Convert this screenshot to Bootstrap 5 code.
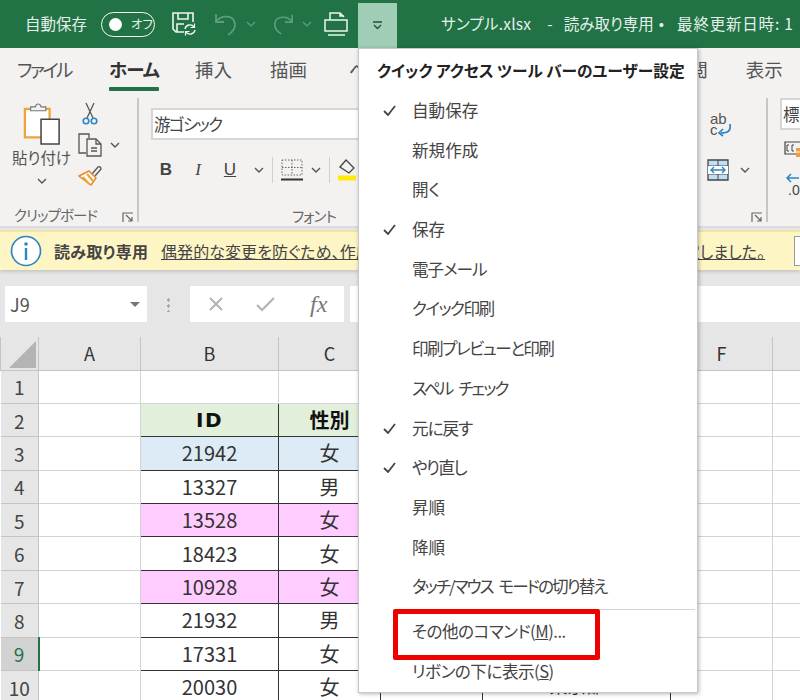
<!DOCTYPE html>
<html lang="ja">
<head>
    <meta charset="UTF-8">
    <meta name="viewport" content="width=device-width, initial-scale=1.0">
    <title>サンプル.xlsx - 読み取り専用</title>
    <link href="https://cdn.jsdelivr.net/npm/bootstrap@5.3.0/dist/css/bootstrap.min.css" rel="stylesheet">
    <style>
        html, body { height: 700px; overflow: hidden; }
        body {
            position: relative;
            width: 800px;
            font-family: "Noto Sans CJK JP", "Noto Sans", sans-serif;
            font-feature-settings: "palt";
            color: #444;
            background: #e6e6e6;
        }
        .titlebar { height: 48px; background: #217346; color: #e6f0ea; font-size: 15.5px; white-space: nowrap; overflow: hidden; }
        .title-h { height: 48px; }
        .autosave { margin-left: 25px; width: 76px; font-size: 15.5px; }
        .toggle-pill { width: 54px; height: 25px; border: 1.5px solid #f2f7f4; border-radius: 13px; font-size: 12.5px; gap: 9px; padding-left: 7px; flex: none; }
        .toggle-dot { width: 13px; height: 13px; background: #fff; border-radius: 50%; }
        .print-ic { margin-left: 12px; }
        .qat-btn { width: 39px; height: 45px; margin-top: 3px; margin-left: 10px; background: #a0cdb5; }
        .title-file { margin-left: 44px; letter-spacing: .25px; }
        .title-dash { margin-left: 16px; }
        .title-ro { margin-left: 11px; }
        .title-dot { margin-left: 5px; }
        .title-time { margin-left: 13px; letter-spacing: .8px; }
        .tabrow { height: 44px; background: #f3f2f1; font-size: 18.5px; color: #555; overflow: hidden; }
        .tab-item { white-space: nowrap; }
        .tab-file { margin-left: 17px; letter-spacing: -2.5px; }
        .tab-on { margin-left: 38px; margin-top: 7px; color: #333; font-weight: 700; letter-spacing: -1px; }
        .tab-on::after { content: ""; display: block; height: 4px; background: #217346; border-radius: 1px; margin-top: 3px; }
        .tab-ins { margin-left: 36px; }
        .tab-draw { margin-left: 38px; }
        .tab-page { margin-left: 42px; }
        .tab-review { margin-left: 267px; }
        .tab-view { margin-left: 38px; }
        .ribbon { height: 136px; background: #f3f2f1; border-bottom: 2px solid #dcdbda; font-size: 15.5px; color: #555; overflow: hidden; }
        .rb-clip { width: 139px; border-right: 2px solid #c8c6c4; margin: 6px 0 4px; flex: none; }
        .rb-font { width: 330px; flex: none; }
        .rb-align { width: 299px; border-right: 2px solid #c8c6c4; margin: 6px 0 4px; flex: none; padding-left: 238px; }
        .rb-num { flex: 1 1 auto; overflow: hidden; padding-left: 12px; }
        .rb-label { font-size: 14.5px; color: #666; line-height: 20px; white-space: nowrap; letter-spacing: -.9px; }
        .paste-col { width: 78px; padding-left: 5px; padding-top: 5px; }
        .paste-label { font-size: 15.5px; line-height: 20px; margin-top: 2px; white-space: nowrap; }
        .paste-chev { margin-top: 11px; }
        .copy-chev { margin-left: 6px; }
        .clip-foot { padding-left: 14px; height: 14px; }
        .launcher { margin: 4px 0 0 25px; }
        .font-box { width: 260px; height: 32px; margin-left: 12px; margin-top: 16px; flex: none; background: #fff; border: 2px solid #d6d6d6; font-size: 16.5px; line-height: 28px; padding-left: 1px; color: #444; white-space: nowrap; letter-spacing: -1.5px; }
        .fmt-row { margin-top: 18px; padding-left: 19px; height: 24px; }
        .font-foot { margin-top: auto; padding-left: 153px; height: 20px; }
        .rb-sep { width: 1px; height: 26px; background: #d0d0d0; }
        .glyph-b, .glyph-i, .glyph-u { width: 16px; font-size: 17px; color: #444; text-align: center; font-family: "Liberation Sans", sans-serif; }
        .glyph-b { font-weight: 700; }
        .glyph-i { font-style: italic; font-family: "Liberation Serif", serif; margin-left: 16px; }
        .glyph-u { text-decoration: underline; margin-left: 16px; }
        .wrap-ic { margin: 15px 0 0 2px; font-family: "Liberation Sans", sans-serif; }
        .merge-row { margin-top: 22px; }
        .merge-chev { margin-left: 11px; }
        .align-foot { margin-top: auto; padding-left: 44px; height: 18px; }
        .style-box { width: 40px; height: 32px; margin-top: 6px; background: #fff; border: 2px solid #d6d6d6; font-size: 16.5px; line-height: 28px; padding-left: 1px; color: #444; white-space: nowrap; }
        .cond-ic { margin: 10px 0 0 4px; }
        .dec-stack { margin: 13px 0 0 5px; }
        .dec-text { font-size: 14px; line-height: 1; color: #444; font-family: "Liberation Sans", sans-serif; white-space: nowrap; margin-left: 3px; }
        .gap-strip { height: 2px; background: #e6e6e6; }
        .infobar { height: 40px; background: #fdf5c4; border-top: 2px solid #ece4a8; box-shadow: 0 2px 3px rgba(0,0,0,.14); font-size: 16px; white-space: nowrap; overflow: hidden; color: #444; position: relative; }
        .info-ic { margin-left: 10px; flex: none; }
        .info-title { margin-left: 12px; width: 107px; flex: none; letter-spacing: .35px; }
        .info-msg { text-decoration: underline; width: 633px; flex: none; letter-spacing: .08px; }
        .info-btn { width: 60px; height: 30px; background: #fff; border: 1px solid #999; flex: none; }
        .formula-row { height: 67px; padding: 16px 0 15px 5px; }
        .name-box { width: 142px; height: 36px; background: #fff; font-size: 18px; color: #555; padding: 0 7px 0 5px; flex: none; }
        .fx-box { width: 154px; height: 36px; background: #fff; color: #aaa; flex: none; padding-left: 18px; }
        .fx-input { height: 36px; background: #fff; margin-left: 6px; }
        .fx-glyph { font-family: "Liberation Serif", serif; font-style: italic; font-size: 24px; color: #777; margin-left: 35px; line-height: 1; }
        .v-dots { width: 3px; height: 15px; background-image: radial-gradient(circle, #aaa 1.5px, transparent 1.6px); background-size: 3px 6px; margin: 0 20px; flex: none; }
        .sheet { table-layout: fixed; border-collapse: collapse; width: 800px; background: #fff; color: #333; }
        .sheet th, .sheet td { border: 1px solid #d4d4d4; padding: 0; text-align: center; font-weight: 400; font-size: 20px; height: 33.4px; line-height: 1; overflow: hidden; white-space: nowrap; }
        .sheet thead th { height: 33px; background: #e6e6e6; font-size: 18px; border-color: #c4c4c4; border-top: 0; color: #333; }
        .sheet .rowhead { background: #e6e6e6; font-size: 19px; color: #444; border-color: #c4c4c4; border-left: 0; }
        .sheet .rowhead-on { background: #d2d2d2; color: #217346; border-right: 2px solid #217346; }
        .corner-tri { width: 0; height: 0; border-style: solid; border-width: 0 0 27px 27px; border-color: transparent transparent #b4b4b4 transparent; margin: 3px 0 0 8px; }
        .sheet .cell-box { border-color: #333; }
        .sheet .cell-head { background: #e2efda; font-weight: 700; color: #111; }
        .sheet .id-head { font-family: "DejaVu Sans", sans-serif; font-size: 20px; letter-spacing: 1.5px; }
        .sheet .cell-blue { background: #ddebf7; }
        .sheet .cell-pink { background: #ffccff; }
        .sheet .cell-addr { font-size: 18px; padding-bottom: 5px; }
        .qat-menu { position: absolute; left: 358px; top: 48px; width: 340px; height: 645px; margin: 0; padding: 0; display: block; border: 1px solid #c8c8c8; border-radius: 0; background: #fff; box-shadow: 1px 1px 4px rgba(0,0,0,.28); color: #444; }
        .qat-menu .dropdown-header { padding: 10px 0 0 18px; height: 42px; font-size: 15.7px; font-weight: 700; color: #222; white-space: nowrap; }
        .qat-menu .dropdown-item { position: relative; height: 39.7px; line-height: 39.7px; padding: 0 0 0 53px; color: #444; font-size: 16.6px; white-space: nowrap; }
        .qat-menu .dropdown-item.kana-s { letter-spacing: -.5px; }
        .qat-menu .dropdown-item.kana-m { letter-spacing: -1px; }
        .qat-menu .dropdown-item.kana-l { letter-spacing: -1.5px; }
        .qat-menu .dropdown-item.kana-gap { letter-spacing: -1.9px; word-spacing: 4px; }
        .qat-menu .dropdown-divider { margin: 2px 2px 2px 38px; border-color: #d4d4d4; opacity: 1; }
        .menu-check { position: absolute; left: 24px; top: 14px; }
        .red-box { position: absolute; left: 393px; top: 609px; width: 207px; height: 51px; border: 5px solid #ee0000; border-radius: 2px; z-index: 1001; }
    </style>
</head>
<body>
    <!-- タイトルバー -->
    <div class="titlebar d-flex align-items-start">
        <div class="title-h d-flex align-items-center">
            <span class="autosave">自動保存</span>
            <span class="toggle-pill d-flex align-items-center"><span class="toggle-dot"></span><span>オフ</span></span>
            <svg class="ms-3" width="27" height="26" viewBox="0 0 27 26" fill="none" stroke="#eef5f0" stroke-width="1.6"><path d="M13 21H5l-3-3V2h20v9"/><path d="M7 2v6h10V2M6 21v-8h7"/><path d="M14 18a5 5 0 0 1 9-2M24 19a5 5 0 0 1-9 2" stroke-width="1.4"/><path d="M23.500 12.500v4h-4M14.500 24.500v-4h4" stroke-width="1.2"/></svg>
            <svg class="ms-3" width="24" height="26" viewBox="0 0 24 26" fill="none" stroke="#5c9d7c" stroke-width="1.8"><path d="M2 3v8h8M2 11C6 4 20 3 21 13c.5 5-4 9-7 11"/></svg>
            <svg class="ms-2" width="10" height="6" viewBox="0 0 10 6" fill="none" stroke="#5c9d7c" stroke-width="1.4"><path d="M1 1l4 4 4-4"/></svg>
            <svg class="ms-3" width="22" height="26" viewBox="0 0 24 26" fill="none" stroke="#5c9d7c" stroke-width="1.8"><path d="M22 3v8h-8M22 11C18 4 4 3 3 13c-.5 5 4 9 7 11"/></svg>
            <svg class="ms-2" width="10" height="6" viewBox="0 0 10 6" fill="none" stroke="#5c9d7c" stroke-width="1.4"><path d="M1 1l4 4 4-4"/></svg>
            <svg class="print-ic" width="24" height="24" viewBox="0 0 24 24" fill="none" stroke="#eef5f0" stroke-width="1.5"><path d="M1 8h22v11H1zM4 23h17M6 8V1h10l4 4M16 1v3h4"/></svg>
        </div>
        <div class="qat-btn d-flex align-items-center justify-content-center flex-shrink-0">
            <svg width="11" height="9" viewBox="0 0 11 9" fill="none" stroke="#24513a" stroke-width="1.4"><path d="M1 1h9M2 4l3.500 3.500L9 4"/></svg>
        </div>
        <div class="title-h d-flex align-items-center">
            <span class="title-file">サンプル.xlsx</span><span class="title-dash">-</span><span class="title-ro">読み取り専用</span><span class="title-dot">•</span><span class="title-time">最終更新日時: 1</span>
        </div>
    </div>

    <!-- タブ -->
    <div class="tabrow d-flex align-items-center">
        <span class="tab-item tab-file">ファイル</span>
        <span class="tab-item tab-on">ホーム</span>
        <span class="tab-item tab-ins">挿入</span>
        <span class="tab-item tab-draw">描画</span>
        <span class="tab-item tab-page">ページ</span>
        <span class="tab-item tab-review">校閲</span>
        <span class="tab-item tab-view">表示</span>
    </div>

    <!-- リボン -->
    <div class="ribbon d-flex">
        <div class="rb-clip d-flex flex-column">
            <div class="d-flex flex-grow-1">
                <div class="paste-col d-flex flex-column align-items-center">
                    <svg width="38" height="42" viewBox="0 0 40 44" fill="none"><path d="M2 6h26v30H2z" fill="#fff" stroke="#f0a33e" stroke-width="2.400"/><path d="M8 7V4h5c1-4 5-4 6 0h5v4H8z" fill="#f3f2f1" stroke="#777" stroke-width="1.200"/><path d="M19 17h19v26H19z" fill="#fff" stroke="#444" stroke-width="1.600"/></svg>
                    <span class="paste-label">貼り付け</span>
                    <svg class="paste-chev" width="10" height="6" viewBox="0 0 10 6" fill="none" stroke="#555" stroke-width="1.400"><path d="M1 1l4 4 4-4"/></svg>
                </div>
                <div class="d-flex flex-column align-items-start pt-1">
                    <svg class="ms-1" width="16" height="23" viewBox="0 0 16 23" fill="none"><path d="M4 1l7 15M12 1L5 16" stroke="#555" stroke-width="1.300"/><circle cx="4" cy="19" r="2.800" stroke="#2b86c5" stroke-width="1.600"/><circle cx="12" cy="19" r="2.800" stroke="#2b86c5" stroke-width="1.600"/></svg>
                    <div class="d-flex align-items-center mt-2">
                        <svg width="26" height="24" viewBox="0 0 26 24" fill="none" stroke="#555" stroke-width="1.300"><path d="M8 20H1V1h10v4"/><path d="M9 6h9l5 5v12H9z" fill="#f3f2f1"/><path d="M18 6v5h5M13 15h6M13 18h6"/></svg>
                        <svg class="copy-chev" width="10" height="6" viewBox="0 0 10 6" fill="none" stroke="#555" stroke-width="1.400"><path d="M1 1l4 4 4-4"/></svg>
                    </div>
                    <svg class="mt-2" width="25" height="21" viewBox="0 0 25 21" fill="none"><path d="M14 9l6-7c1-1 3 0 3 2l-6 7" fill="#f3f2f1" stroke="#555" stroke-width="1.300"/><path d="M1 11l10-5 7 7-5 7z" fill="#fff" stroke="#e8892b" stroke-width="1.500"/><path d="M5 12l6 7M9 9l6 7" stroke="#f0a33e" stroke-width="2.200"/></svg>
                </div>
            </div>
            <div class="clip-foot d-flex align-items-center">
                <span class="rb-label">クリップボード</span>
                <svg class="launcher" width="12" height="11" viewBox="0 0 12 11" fill="none" stroke="#666" stroke-width="1.200"><path d="M1 10V1h10M4 3l6 6M10 5v4H6"/></svg>
            </div>
        </div>
        <div class="rb-font d-flex flex-column">
            <div class="font-box">游ゴシック</div>
            <div class="fmt-row d-flex align-items-center">
                <span class="glyph-b">B</span>
                <span class="glyph-i">I</span>
                <span class="glyph-u">U</span>
                <svg class="ms-3" width="10" height="6" viewBox="0 0 10 6" fill="none" stroke="#555" stroke-width="1.400"><path d="M1 1l4 4 4-4"/></svg>
                <span class="rb-sep ms-2"></span>
                <svg class="ms-2" width="22" height="22" viewBox="0 0 22 22" fill="none"><path d="M1 1h20v15H1zM11 1v15M1 8.500h20" stroke="#666" stroke-dasharray="1.500 1.500"/><path d="M0 20.500h22" stroke="#333" stroke-width="2"/></svg>
                <svg class="ms-2" width="10" height="6" viewBox="0 0 10 6" fill="none" stroke="#555" stroke-width="1.400"><path d="M1 1l4 4 4-4"/></svg>
                <span class="rb-sep ms-2"></span>
                <svg class="ms-2" width="18" height="24" viewBox="0 0 18 24" fill="none"><path d="M2 9l6-7 8 8-5 5z" stroke="#444" stroke-width="1.300"/><path d="M0 20h18" stroke="#ffec00" stroke-width="5"/></svg>
            </div>
            <div class="rb-label font-foot">フォント</div>
        </div>
        <div class="rb-align d-flex flex-column">
            <svg class="wrap-ic" width="24" height="24" viewBox="0 0 24 24" fill="none"><text x="1" y="11" font-size="15" fill="#555">ab</text><text x="1" y="22" font-size="15" fill="#555">c</text><path d="M21 11c1 7-2 9-9 9M14 16l-4 4 4 3" stroke="#2b86c5" stroke-width="1.700"/></svg>
            <div class="merge-row d-flex align-items-center">
                <svg width="22" height="22" viewBox="0 0 22 22" fill="none"><path d="M1 1h20v20H1z" fill="#bfe0f4" stroke="#444" stroke-width="1.300"/><path d="M1 7h20M1 15h20M11 1v6M11 15v6" stroke="#444"/><path d="M1 7h20v8H1z" fill="#fff"/><path d="M4 11h14M7 8l-3 3 3 3M15 8l3 3-3 3" stroke="#2b86c5" stroke-width="1.400"/></svg>
                <svg class="merge-chev" width="10" height="6" viewBox="0 0 10 6" fill="none" stroke="#555" stroke-width="1.400"><path d="M1 1l4 4 4-4"/></svg>
            </div>
            <div class="align-foot">
                <svg width="12" height="11" viewBox="0 0 12 11" fill="none" stroke="#666" stroke-width="1.200"><path d="M1 10V1h10M4 3l6 6M10 5v4H6"/></svg>
            </div>
        </div>
        <div class="rb-num d-flex flex-column">
            <div class="style-box">標準</div>
            <svg class="cond-ic" width="22" height="20" viewBox="0 0 22 20" fill="none"><path d="M1 2h17v12H1z" stroke="#444" stroke-width="1.200"/><path d="M5 5H3v6h2M10 5H8v6h2" stroke="#444"/><path d="M12 8h9v9h-9z" fill="#f29b3c"/><path d="M12 12h9" stroke="#fff"/></svg>
            <div class="dec-stack d-flex flex-column">
                <svg width="20" height="10" viewBox="0 0 20 10" fill="none" stroke="#2b86c5" stroke-width="1.500"><path d="M14 5H2M6 1L2 5l4 4"/></svg>
                <span class="dec-text">.00</span>
            </div>
        </div>
    </div>
    <div class="gap-strip"></div>

    <!-- 読み取り専用バー -->
    <div class="infobar d-flex align-items-center">
        <svg class="info-ic" width="32" height="32" viewBox="0 0 32 32" fill="none"><circle cx="16" cy="16" r="14.500" fill="#fff" stroke="#2b86c5" stroke-width="1.700"/><circle cx="16" cy="9" r="1.800" fill="#2b86c5"/><path d="M16 13v12" stroke="#2b86c5" stroke-width="2.400"/></svg>
        <strong class="info-title">読み取り専用</strong>
        <span class="info-msg">偶発的な変更を防ぐため、作成者がこのブックを読み取り専用で開くように設定しました。</span>
        <span class="info-btn"></span>
    </div>

    <!-- 数式バー -->
    <div class="formula-row d-flex">
        <div class="name-box d-flex align-items-center justify-content-between">
            <span>J9</span>
            <svg width="10" height="5" viewBox="0 0 10 5"><path d="M0 0h10L5 5z" fill="#777"/></svg>
        </div>
        <span class="v-dots align-self-center"></span>
        <div class="fx-box d-flex align-items-center">
            <svg width="16" height="16" viewBox="0 0 16 16" fill="none" stroke="#b4b4b4" stroke-width="2"><path d="M2 2l12 12M14 2L2 14"/></svg>
            <svg class="ms-4 ps-2" width="27" height="16" viewBox="0 0 19 16" fill="none" stroke="#b4b4b4" stroke-width="2.200"><path d="M1 9l5 5L18 2"/></svg>
            <span class="fx-glyph">fx</span>
        </div>
        <div class="fx-input flex-grow-1"></div>
    </div>

    <!-- シート -->
    <table class="sheet">
        <colgroup><col style="width:38px"><col style="width:102px"><col style="width:138px"><col style="width:102px"><col style="width:102px"><col style="width:188px"><col style="width:102px"><col style="width:28px"></colgroup>
        <thead>
            <tr><th><div class="corner-tri"></div></th><th>A</th><th>B</th><th>C</th><th>D</th><th>E</th><th>F</th><th></th></tr>
        </thead>
        <tbody>
            <tr><td class="rowhead">1</td><td></td><td></td><td></td><td></td><td></td><td></td><td></td></tr>
            <tr><td class="rowhead">2</td><td></td><td class="cell-box cell-head id-head">ID</td><td class="cell-box cell-head">性別</td><td class="cell-box cell-head"></td><td class="cell-box cell-head"></td><td></td><td></td></tr>
            <tr><td class="rowhead">3</td><td></td><td class="cell-box cell-blue">21942</td><td class="cell-box cell-blue">女</td><td class="cell-box cell-blue"></td><td class="cell-box cell-blue"></td><td></td><td></td></tr>
            <tr><td class="rowhead">4</td><td></td><td class="cell-box">13327</td><td class="cell-box">男</td><td class="cell-box"></td><td class="cell-box"></td><td></td><td></td></tr>
            <tr><td class="rowhead">5</td><td></td><td class="cell-box cell-pink">13528</td><td class="cell-box cell-pink">女</td><td class="cell-box cell-pink"></td><td class="cell-box cell-pink"></td><td></td><td></td></tr>
            <tr><td class="rowhead">6</td><td></td><td class="cell-box">18423</td><td class="cell-box">女</td><td class="cell-box"></td><td class="cell-box"></td><td></td><td></td></tr>
            <tr><td class="rowhead">7</td><td></td><td class="cell-box cell-pink">10928</td><td class="cell-box cell-pink">女</td><td class="cell-box cell-pink"></td><td class="cell-box cell-pink"></td><td></td><td></td></tr>
            <tr><td class="rowhead">8</td><td></td><td class="cell-box">21932</td><td class="cell-box">男</td><td class="cell-box"></td><td class="cell-box"></td><td></td><td></td></tr>
            <tr><td class="rowhead rowhead-on">9</td><td></td><td class="cell-box">17331</td><td class="cell-box">女</td><td class="cell-box"></td><td class="cell-box"></td><td></td><td></td></tr>
            <tr><td class="rowhead">10</td><td></td><td class="cell-box">20030</td><td class="cell-box">女</td><td class="cell-box"></td><td class="cell-box cell-addr">東京都</td><td></td><td></td></tr>
        </tbody>
    </table>

    <!-- クイック アクセス ツール バーのメニュー -->
    <div class="dropdown-menu show qat-menu">
        <div class="dropdown-header">クイック アクセス ツール バーのユーザー設定</div>
        <a class="dropdown-item" href="#"><svg class="menu-check" width="13" height="11" viewBox="0 0 13 11" fill="none" stroke="#444" stroke-width="1.800"><path d="M1 6l4 4 7-9"/></svg>自動保存</a>
        <a class="dropdown-item" href="#">新規作成</a>
        <a class="dropdown-item" href="#">開く</a>
        <a class="dropdown-item" href="#"><svg class="menu-check" width="13" height="11" viewBox="0 0 13 11" fill="none" stroke="#444" stroke-width="1.800"><path d="M1 6l4 4 7-9"/></svg>保存</a>
        <a class="dropdown-item kana-m" href="#">電子メール</a>
        <a class="dropdown-item kana-l" href="#">クイック印刷</a>
        <a class="dropdown-item kana-l" href="#">印刷プレビューと印刷</a>
        <a class="dropdown-item kana-gap" href="#">スペル チェック</a>
        <a class="dropdown-item kana-m" href="#"><svg class="menu-check" width="13" height="11" viewBox="0 0 13 11" fill="none" stroke="#444" stroke-width="1.800"><path d="M1 6l4 4 7-9"/></svg>元に戻す</a>
        <a class="dropdown-item kana-l" href="#"><svg class="menu-check" width="13" height="11" viewBox="0 0 13 11" fill="none" stroke="#444" stroke-width="1.800"><path d="M1 6l4 4 7-9"/></svg>やり直し</a>
        <a class="dropdown-item" href="#">昇順</a>
        <a class="dropdown-item" href="#">降順</a>
        <a class="dropdown-item kana-gap" href="#">タッチ/マウス モードの切り替え</a>
        <div class="dropdown-divider"></div>
        <a class="dropdown-item kana-s" href="#">その他のコマンド(<u>M</u>)...</a>
        <a class="dropdown-item kana-s" href="#">リボンの下に表示(<u>S</u>)</a>
    </div>
    <div class="red-box"></div>
</body>
</html>
